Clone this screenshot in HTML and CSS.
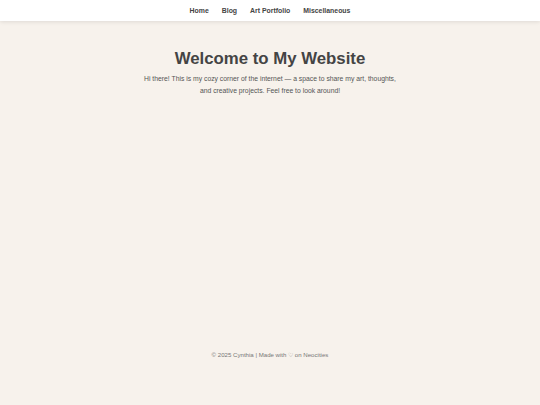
FILE: index.html
```html
<!DOCTYPE html>
<html lang="en">
<head>
<meta charset="utf-8">
<title>My Website</title>
<link rel="stylesheet" href="styles.css">
</head>
<body>
<nav class="topnav">
  <a href="#">Home</a>
  <a href="#">Blog</a>
  <a href="#">Art Portfolio</a>
  <a href="#">Miscellaneous</a>
</nav>
<main class="intro">
  <h1>Welcome to My Website</h1>
  <p>Hi there! This is my cozy corner of the internet — a space to share my art, thoughts, and creative projects. Feel free to look around!</p>
</main>
<footer class="site-footer">© 2025 Cynthia | Made with ♡ on Neocities</footer>
</body>
</html>
```
FILE: styles.css
```css
html, body {
  margin: 0;
  padding: 0;
}
body {
  background: #f7f2ec;
  font-family: "Liberation Sans", Arial, sans-serif;
  color: #444;
  min-height: 405px;
  display: flex;
  flex-direction: column;
}
.topnav {
  background: #fff;
  height: 21px;
  display: flex;
  justify-content: center;
  align-items: center;
  gap: 13px;
  box-shadow: 0 1px 4px rgba(0,0,0,0.1);
}
.topnav a {
  color: #444;
  text-decoration: none;
  font-weight: bold;
  font-size: 6.9px;
}
.intro {
  text-align: center;
  width: 262px;
  margin: 0 auto;
  flex: 1;
}
.intro h1 {
  font-size: 16.8px;
  margin: 28px 0 4px;
  line-height: 20px;
  color: #444;
}
.intro p {
  font-size: 6.8px;
  line-height: 12px;
  margin: 0;
  color: #555;
}
.site-footer {
  text-align: center;
  font-size: 6.1px;
  color: #777;
  padding-bottom: 47px;
}
```
